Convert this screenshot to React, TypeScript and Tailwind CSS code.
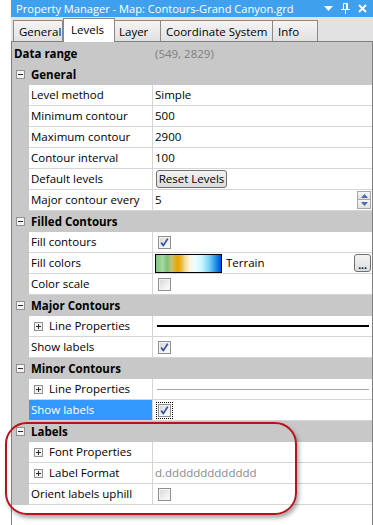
import React from "react";

const Check = ({ checked, focus }: { checked?: boolean; focus?: boolean }) => (
  <div className={`flex items-center justify-center ${focus ? "outline outline-1 outline-dotted outline-black outline-offset-[1px]" : ""}`}>
    <svg width="13" height="13" viewBox="0 0 13 13">
      <defs>
        <linearGradient id="cbg" x1="0" y1="0" x2="1" y2="1">
          <stop offset="0" stopColor="#d9d9d9" />
          <stop offset="1" stopColor="#fbfbfb" />
        </linearGradient>
      </defs>
      <rect x="0.5" y="0.5" width="12" height="12" fill="#f4f4f4" stroke="#8e8f8f" />
      <rect x="2" y="2" width="9" height="9" fill="url(#cbg)" />
      {checked && (
        <path d="M3.2 6.6 L5.3 9.6 L9.8 2.6" fill="none" stroke="#2f4e9c" strokeWidth="1.7" strokeLinejoin="round" />
      )}
    </svg>
  </div>
);

const Expander = ({ plus }: { plus?: boolean }) => (
  <svg width="9" height="9" viewBox="0 0 9 9">
    <rect x="0.5" y="0.5" width="8" height="8" fill="#f3f3f3" stroke="#919191" />
    <path d="M2 4.5 H7" stroke="#2b2b2b" strokeWidth="1" />
    {plus && <path d="M4.5 2 V7" stroke="#2b2b2b" strokeWidth="1" />}
  </svg>
);

const Category = ({ title }: { title: string }) => (
  <div className="flex h-[21px] items-center bg-[#c8c8c8]">
    <div className="flex w-[17px] justify-end pr-[4px]">
      <Expander />
    </div>
    <span className="pl-[2px] font-bold">{title}</span>
  </div>
);

const Prop = ({
  name,
  plus,
  selected,
  children,
  valuePad = "pl-[2px]",
}: {
  name: string;
  plus?: boolean;
  selected?: boolean;
  children?: React.ReactNode;
  valuePad?: string;
}) => (
  <div className="flex h-[21px]">
    <div className="w-[17px] bg-[#c8c8c8]" />
    <div className="flex flex-1 border-b border-[#d5d5d5] bg-white">
      <div
        className={`flex w-[123px] items-center ${plus ? "pl-[5px]" : "pl-[2px]"} ${
          selected ? "bg-[#3399ff] text-white" : ""
        }`}
      >
        {plus && (
          <span className="mr-[6px] flex">
            <Expander plus />
          </span>
        )}
        <span className="whitespace-nowrap">{name}</span>
      </div>
      <div className="w-px bg-[#d5d5d5]" />
      <div className={`flex flex-1 items-center ${valuePad}`}>{children}</div>
    </div>
  </div>
);

export default function App() {
  return (
    <div className="relative h-[525px] w-[373px] overflow-hidden bg-white font-['Open_Sans',sans-serif] text-[11.5px] text-black">
      <div className="ml-[11px] flex h-full flex-col">
        {/* title bar */}
        <div className="flex h-[17px] items-center bg-[#3fa0ee] pl-[5px] pr-[6px] text-white">
          <span className="flex-1 whitespace-nowrap text-[11.1px] leading-none">Property Manager - Map: Contours-Grand Canyon.grd</span>
          <svg width="9" height="6" viewBox="0 0 9 6" className="mr-[8px]">
            <path d="M0 0 H9 L4.5 5 Z" fill="white" />
          </svg>
          <svg width="9" height="11" viewBox="0 0 9 11" className="mr-[8px]">
            <path d="M2.5 0.5 V6 M5.5 0.5 V6 M6.5 0.5 V6 M2.5 0.5 H6.5 M0 6.5 H9 M4.5 6.5 V11" stroke="white" strokeWidth="1" fill="none" />
          </svg>
          <svg width="9" height="9" viewBox="0 0 9 9">
            <path d="M1 1 L8 8 M8 1 L1 8" stroke="white" strokeWidth="1.8" />
          </svg>
        </div>
        {/* tab strip */}
        <div className="flex h-[25px] items-end border-b border-[#7f7f7f] bg-[#e2e2e2] pl-[2px]">
          <div className="flex h-[21px] w-[50px] items-center border-l border-r border-t border-[#8a8a8a] bg-[linear-gradient(#f4f4f4,#e1e1e1)] pl-[5px] pt-[1px]">
            General
          </div>
          <div className="relative z-10 -mb-px flex h-[24px] w-[52px] items-start border-l border-r border-t border-[#8a8a8a] bg-white pl-[7px] pt-[2px]">
            Levels
          </div>
          <div className="flex h-[21px] w-[46px] items-center border-r border-t border-[#8a8a8a] bg-[linear-gradient(#f4f4f4,#e1e1e1)] pl-[4px] pt-[1px]">
            Layer
          </div>
          <div className="flex h-[21px] w-[112px] items-center border-r border-t border-[#8a8a8a] bg-[linear-gradient(#f4f4f4,#e1e1e1)] pl-[5px] pt-[1px]">
            Coordinate System
          </div>
          <div className="flex h-[21px] w-[45px] items-center border-r border-t border-[#8a8a8a] bg-[linear-gradient(#f4f4f4,#e1e1e1)] pl-[5px] pt-[1px]">
            Info
          </div>
        </div>
        {/* grid */}
        <div className="flex flex-1 flex-col border-l border-r border-[#7f7f7f] bg-white">
          <div className="h-px bg-[#c8c8c8]" />
          <div className="flex h-[21px] items-center bg-[#c8c8c8]">
            <span className="w-[143px] pl-[2px] font-bold">Data range</span>
            <span className="text-[#808080]">(549, 2829)</span>
          </div>
          <Category title="General" />
          <Prop name="Level method">Simple</Prop>
          <Prop name="Minimum contour">500</Prop>
          <Prop name="Maximum contour">2900</Prop>
          <Prop name="Contour interval">100</Prop>
          <Prop name="Default levels" valuePad="pl-[3px]">
            <div className="flex h-[18px] w-[71px] items-center justify-center rounded-[3px] border border-[#707070] bg-[linear-gradient(#f2f2f2,#dcdcdc)]">
              Reset Levels
            </div>
          </Prop>
          <Prop name="Major contour every" valuePad="pl-[2px] pr-[1px]">
            <span className="flex-1">5</span>
            <div className="flex flex-col">
              <div className="flex h-[9px] w-[14px] items-center justify-center border border-[#a6a6a6] bg-[linear-gradient(#f6f6f6,#e2e2e2)]">
                <svg width="7" height="4" viewBox="0 0 7 4">
                  <path d="M0 4 L3.5 0 L7 4 Z" fill="#4a6bb0" />
                </svg>
              </div>
              <div className="flex h-[9px] w-[14px] items-center justify-center border border-t-0 border-[#a6a6a6] bg-[linear-gradient(#f6f6f6,#e2e2e2)]">
                <svg width="7" height="4" viewBox="0 0 7 4">
                  <path d="M0 0 L7 0 L3.5 4 Z" fill="#4a6bb0" />
                </svg>
              </div>
            </div>
          </Prop>
          <Category title="Filled Contours" />
          <Prop name="Fill contours" valuePad="pl-[5px]">
            <Check checked />
          </Prop>
          <Prop name="Fill colors" valuePad="pl-[2px] pr-[1px]">
            <div className="h-[19px] w-[67px] border border-black bg-[linear-gradient(to_right,#7cc47c_0%,#a9d9a0_10%,#7dc27d_17%,#c9c070_24%,#e6a600_33%,#e8b428_38%,#f3dca0_45%,#fff6e0_52%,#eaffff_60%,#cdf6ff_70%,#79d0f4_82%,#2a96ea_91%,#0046e6_100%)]" />
            <span className="ml-[4px] flex-1">Terrain</span>
            <div className="flex h-[18px] w-[17px] items-end justify-center rounded-[3px] border border-[#707070] bg-[linear-gradient(#f4f4f4,#dddddd)] pb-[1px] text-[10px] font-bold leading-none">
              ...
            </div>
          </Prop>
          <Prop name="Color scale" valuePad="pl-[5px]">
            <Check />
          </Prop>
          <Category title="Major Contours" />
          <Prop name="Line Properties" plus valuePad="pl-[4px] pr-[3px]">
            <div className="h-[1.5px] flex-1 bg-black" />
          </Prop>
          <Prop name="Show labels" valuePad="pl-[5px]">
            <Check checked />
          </Prop>
          <Category title="Minor Contours" />
          <Prop name="Line Properties" plus valuePad="pl-[4px] pr-[3px]">
            <div className="h-px flex-1 bg-[#a8a8a8]" />
          </Prop>
          <Prop name="Show labels" selected valuePad="pl-[5px]">
            <Check checked focus />
          </Prop>
          <Category title="Labels" />
          <Prop name="Font Properties" plus />
          <Prop name="Label Format" plus>
            <span className="text-[#8a8a8a]">d.ddddddddddddd</span>
          </Prop>
          <Prop name="Orient labels uphill" valuePad="pl-[5px]">
            <Check />
          </Prop>
        </div>
      </div>
      {/* annotation */}
      <div className="absolute left-[5px] top-[422px] h-[93px] w-[292px] rounded-[22px] border-2 border-[#b8131c] shadow-[2px_3px_4px_rgba(0,0,0,0.35)]" />
    </div>
  );
}
